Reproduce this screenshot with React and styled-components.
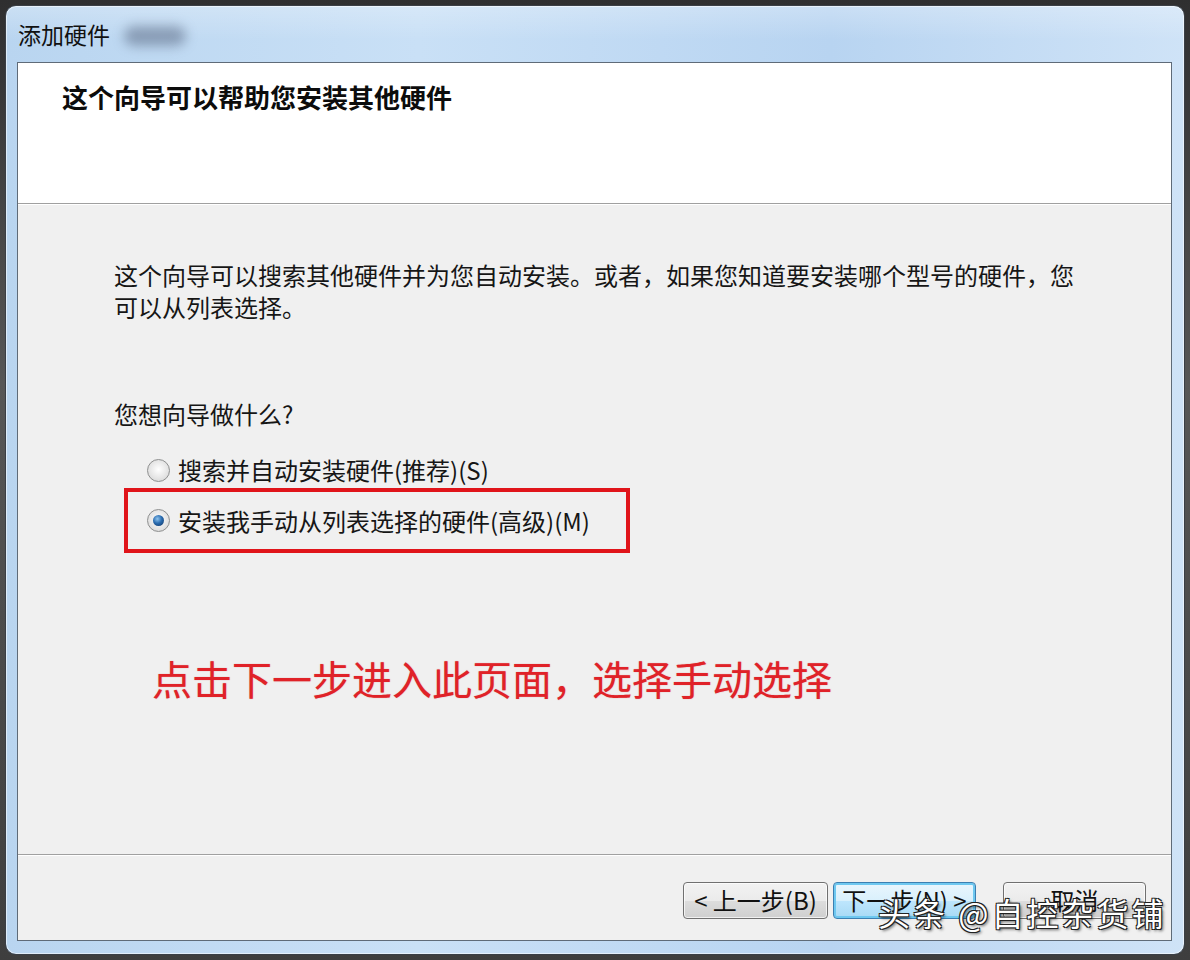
import React from "react";
import styled, { createGlobalStyle } from "styled-components";

const GlobalStyle = createGlobalStyle`
  html, body {
    margin: 0;
    padding: 0;
    background: #4b4b4b;
  }
  body {
    font-family: "Noto Sans CJK SC", "Noto Sans", sans-serif;
    color: #161616;
  }
`;

const Desktop = styled.div`
  width: 1190px;
  height: 960px;
  box-sizing: border-box;
  padding: 5px;
  background: linear-gradient(180deg, #2f2f30 0%, #575757 40%, #3e3e3e 100%);
  display: flex;
`;

const Window = styled.div`
  flex: 1;
  display: flex;
  flex-direction: column;
  border: 1px solid #3a3f46;
  border-radius: 11px;
  background: linear-gradient(90deg, #b9d5f0 0%, #c9e0f6 35%, #b8d4f1 70%, #cfe3f7 100%);
  box-shadow: inset 0 0 0 1px rgba(255, 255, 255, 0.55);
  overflow: hidden;
`;

const TitleBar = styled.div`
  height: 56px;
  display: flex;
  align-items: center;
  padding-left: 12px;
  gap: 14px;
  font-size: 23px;
  color: #111;
  background: linear-gradient(180deg, rgba(255, 255, 255, 0.25) 0%, rgba(255, 255, 255, 0) 60%);
`;

const Blurred = styled.span`
  width: 62px;
  height: 20px;
  border-radius: 10px;
  background: rgba(70, 85, 110, 0.45);
  filter: blur(6px);
  margin-top: 4px;
`;

const Client = styled.div`
  flex: 1;
  margin: 0 12px 13px 11px;
  border: 1px solid #5f6b78;
  display: flex;
  flex-direction: column;
  background: #f0f0f0;
`;

const Header = styled.div`
  height: 141px;
  background: #ffffff;
  border-bottom: 1px solid #a0a0a0;
  box-shadow: 0 1px 0 #ffffff;
  padding: 16px 0 0 44px;
  box-sizing: border-box;
  font-size: 26px;
  font-weight: 700;
  line-height: 36px;
  color: #0c0c0c;
`;

const Body = styled.div`
  flex: 1;
  padding: 55px 0 0 96px;
  display: flex;
  flex-direction: column;
  font-size: 24px;
  line-height: 32px;
`;

const Paragraph = styled.p`
  margin: 0;
  width: 980px;
`;

const Question = styled.div`
  margin-top: 75px;
`;

const Options = styled.div`
  margin-top: 24px;
  display: flex;
  flex-direction: column;
`;

const Option = styled.div`
  display: flex;
  align-items: center;
  gap: 8px;
  height: ${(p) => (p.$boxed ? "57px" : "32px")};
  width: fit-content;
  margin-left: 10px;
  margin-top: ${(p) => (p.$boxed ? "2px" : "0")};
  padding: ${(p) => (p.$boxed ? "0 36px 0 19px" : "0 0 0 23px")};
  border: ${(p) => (p.$boxed ? "4px solid #e0141a" : "none")};
`;

const Radio = styled.span`
  position: relative;
  width: 21px;
  height: 21px;
  border-radius: 50%;
  border: 1px solid #8e8f8f;
  background: radial-gradient(circle at 50% 45%, #ffffff 0%, #e6e6e6 55%, #cfcfcf 100%);
  flex-shrink: 0;

  &::after {
    content: "";
    display: ${(p) => (p.$checked ? "block" : "none")};
    position: absolute;
    left: 5px;
    top: 5px;
    width: 11px;
    height: 11px;
    border-radius: 50%;
    background: radial-gradient(circle at 40% 35%, #8fc4ee 0%, #2a6cb0 45%, #0d2f5e 100%);
  }
`;

const Note = styled.div`
  margin-top: 100px;
  margin-left: 38px;
  font-size: 40px;
  line-height: 50px;
  color: #e02228;
  text-shadow: 0 0 1px rgba(200, 30, 35, 0.5);
`;

const Footer = styled.div`
  position: relative;
  height: 86px;
  border-top: 1px solid #a0a0a0;
  box-shadow: inset 0 1px 0 #ffffff;
  display: flex;
  justify-content: flex-end;
  align-items: flex-start;
  padding: 27px 25px 0 0;
  box-sizing: border-box;
`;

const Button = styled.button`
  width: ${(p) => p.$w || 143}px;
  height: 37px;
  margin-left: ${(p) => p.$gap || 0}px;
  padding: 0 0 2px;
  font-family: "Noto Sans CJK SC", "Noto Sans", sans-serif;
  font-size: 24px;
  line-height: 1;
  color: #111;
  border-radius: 4px;
  border: 1px solid ${(p) => (p.$focused ? "#3c7fb1" : "#707070")};
  background: ${(p) =>
    p.$focused
      ? "linear-gradient(180deg, #eaf6fd 0%, #d9f0fc 50%, #bee6fd 51%, #a7d9f5 100%)"
      : "linear-gradient(180deg, #f2f2f2 0%, #ebebeb 50%, #dddddd 51%, #cfcfcf 100%)"};
  box-shadow: ${(p) =>
    p.$focused ? "inset 0 0 0 2px #6ec8f0" : "inset 0 0 0 1px rgba(255,255,255,0.7)"};
`;

const Watermark = styled.div`
  position: absolute;
  left: 860px;
  top: 36px;
  font-size: 32px;
  line-height: 42px;
  letter-spacing: 3px;
  color: #ffffff;
  white-space: nowrap;
  text-shadow: 1px 1px 0 #222, -1px -1px 0 #222, 1px -1px 0 #222, -1px 1px 0 #222,
    2px 2px 3px rgba(0, 0, 0, 0.6);
`;

export default function App() {
  return (
    <>
      <GlobalStyle />
      <Desktop>
        <Window>
          <TitleBar>
            添加硬件
            <Blurred />
          </TitleBar>
          <Client>
            <Header>这个向导可以帮助您安装其他硬件</Header>
            <Body>
              <Paragraph>
                这个向导可以搜索其他硬件并为您自动安装。或者，如果您知道要安装哪个型号的硬件，您
                <br />
                可以从列表选择。
              </Paragraph>
              <Question>您想向导做什么?</Question>
              <Options>
                <Option>
                  <Radio />
                  搜索并自动安装硬件(推荐)(S)
                </Option>
                <Option $boxed>
                  <Radio $checked />
                  安装我手动从列表选择的硬件(高级)(M)
                </Option>
              </Options>
              <Note>点击下一步进入此页面，选择手动选择</Note>
            </Body>
            <Footer>
              <Button $w={145}>&lt; 上一步(B)</Button>
              <Button $w={143} $gap={5} $focused>
                下一步(N) &gt;
              </Button>
              <Button $w={143} $gap={27}>
                取消
              </Button>
              <Watermark>头条 @自控杂货铺</Watermark>
            </Footer>
          </Client>
        </Window>
      </Desktop>
    </>
  );
}
